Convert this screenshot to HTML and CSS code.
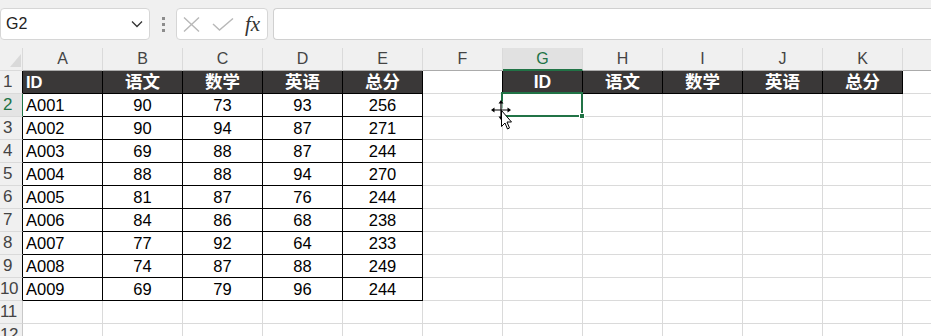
FILE: index.html
```html
<!DOCTYPE html>
<html>
<head>
	<title>成绩表</title>
	<meta charset=utf-8>
	<link rel="stylesheet" href="styles.css">
</head>
<body>
	<div class="toolbar">
		<div class="namebox">
			<span>G2</span>
			<svg width="12" height="8" viewBox="0 0 12 8"><path d="M1 1.5 L6 6.5 L11 1.5" fill="none" stroke="#333" stroke-width="1.3"/></svg>
		</div>
		<div class="grip"><i></i><i></i><i></i></div>
		<div class="fxbox">
			<svg width="17" height="15" viewBox="0 0 17 15"><path d="M1 0.5 L16 14.5 M16 0.5 L1 14.5" stroke="#b8b8b8" stroke-width="1.4"/></svg>
			<svg width="22" height="13" viewBox="0 0 22 13"><path d="M1 6 L7.5 12 L21 0.5" fill="none" stroke="#b8b8b8" stroke-width="1.4"/></svg>
			<span class="fx">fx</span>
		</div>
		<div class="formula"></div>
	</div>

	<div class="sheet">
		<div class="grid" id="grid"></div>
		<!-- move cursor over G2 -->
		<svg class="cursor" width="26" height="34" viewBox="0 0 26 34">
			<g stroke="#fff" stroke-width="3" stroke-linecap="square">
				<path d="M12 5 V19 M5 12 H19"/>
			</g>
			<path d="M12 4.5 V19.5 M4.5 12 H19.5" stroke="#000" stroke-width="1.2"/>
			<path d="M12 2 L9.5 5.5 H14.5 Z M12 22 L9.5 18.5 H14.5 Z M2 12 L5.5 9.5 V14.5 Z M22 12 L18.5 9.5 V14.5 Z" fill="#000"/>
			<path d="M12.5 12.5 V28.5 L16 25 L18.5 31 L20.5 30 L18 24 H22.5 Z" fill="#fff" stroke="#000" stroke-width="1" stroke-linejoin="round"/>
		</svg>
	</div>

	<script>
		let letters = 'ABCDEFGHIJK'.split('');
		let heads = ['ID', '语文', '数学', '英语', '总分'];
		let rows = [
			['A001', 90, 73, 93, 256],
			['A002', 90, 94, 87, 271],
			['A003', 69, 88, 87, 244],
			['A004', 88, 88, 94, 270],
			['A005', 81, 87, 76, 244],
			['A006', 84, 86, 68, 238],
			['A007', 77, 92, 64, 233],
			['A008', 74, 87, 88, 249],
			['A009', 69, 79, 96, 244]
		];
		let grid = document.getElementById('grid');

		function add(cls, text) {
			let d = document.createElement('div');
			d.className = cls;
			d.textContent = text === undefined ? '' : text;
			grid.appendChild(d);
			return d;
		}

		add('corner');
		letters.forEach(function (l) {
			add('colhead' + (l == 'G' ? ' sel' : ''), l);
		});
		add('colhead');

		for (let r = 1; r <= 12; r++) {
			add('rowhead' + (r <= 10 ? ' edge' : '') + (r == 2 ? ' sel' : '') + (r >= 10 ? ' wide' : ''), r);
			for (let c = 0; c < 12; c++) {
				let cls = 'cell';
				let text = '';
				if (r <= 10 && c <= 4) {
					cls += ' tb';
					if (r == 1) {
						cls += ' hd';
						text = heads[c];
					} else {
						text = rows[r - 2][c];
					}
					if (c > 0) cls += ' c';
				}
				if (r == 1 && c >= 6 && c <= 10) {
					cls += ' tb hd c';
					text = heads[c - 6];
				}
				if (r == 1 && c == 5) cls += ' bl';
				let d = add(cls, text);
				if (r == 2 && c == 6) {
					d.classList.add('active');
					d.innerHTML = '<div class="selbox"><i class="handle"></i></div>';
				}
			}
		}
	</script>
</body>
</html>
```

FILE: styles.css
```css
body {
	margin: 0;
	width: 931px;
	height: 336px;
	overflow: hidden;
	background: #f0f0f0;
	font-family: "Liberation Sans", "Noto Sans CJK SC", sans-serif;
}

/* formula bar */
.toolbar {
	display: flex;
	align-items: center;
	height: 32px;
	padding: 8px 0;
}
.namebox {
	width: 150px;
	height: 32px;
	box-sizing: border-box;
	background: #fff;
	border: 1px solid #d6d6d6;
	border-radius: 4px;
	display: flex;
	align-items: center;
	justify-content: space-between;
	padding: 0 6px 0 5px;
	font-size: 16px;
	color: #222;
}
.grip {
	width: 26px;
	display: flex;
	flex-direction: column;
	align-items: center;
	gap: 3px;
}
.grip i {
	width: 3px;
	height: 3px;
	background: #8c8c8c;
}
.fxbox {
	width: 92px;
	height: 32px;
	box-sizing: border-box;
	background: #fff;
	border: 1px solid #d6d6d6;
	border-radius: 4px;
	display: flex;
	align-items: center;
	gap: 12px;
	padding-left: 6px;
	margin-right: 5px;
}
.fx {
	font-family: "Liberation Serif", serif;
	font-style: italic;
	font-size: 21px;
	color: #333;
	margin-left: -1px;
}
.formula {
	flex: 1;
	height: 32px;
	box-sizing: border-box;
	background: #fff;
	border: 1px solid #d0d0d0;
	border-right: none;
	border-radius: 4px 0 0 4px;
}

/* sheet */
.sheet {
	position: relative;
	background: #fff;
	overflow: hidden;
	height: 288px;
}
.grid {
	display: grid;
	grid-template-columns: 23px repeat(12, 80px);
	grid-auto-rows: 23px;
}
.grid > div {
	box-sizing: border-box;
	border-right: 1px solid #dadada;
	border-bottom: 1px solid #dadada;
	overflow: hidden;
	white-space: nowrap;
}
.corner {
	background: #f0f0f0;
	display: flex;
	align-items: flex-end;
	justify-content: flex-end;
	padding: 0 1px 3px 0;
}
.corner::after {
	content: "";
	width: 0;
	height: 0;
	border-left: 11px solid transparent;
	border-bottom: 13px solid #d9d9d9;
}
.colhead {
	background: #f0f0f0;
	border-bottom-color: #ababab !important;
	text-align: center;
	font-size: 16px;
	line-height: 22px;
	color: #444;
}
.colhead.sel {
	background: #e1e1e1;
	color: #217346;
	border-bottom: 2px solid #217346 !important;
}
.rowhead {
	background: #f0f0f0;
	border-right-color: #c8c8c8 !important;
	font-size: 17px;
	line-height: 22px;
	padding-left: 3px;
	color: #444;
}
.rowhead.wide {
	padding-left: 0;
	letter-spacing: -0.5px;
}
.rowhead.edge {
	border-right-color: #000 !important;
}
.rowhead.sel {
	background: #e4e4e4;
	color: #217346;
	border-right-color: #217346 !important;
}

.cell {
	font-size: 16.5px;
	line-height: 22px;
	padding: 0 3px;
	color: #000;
}
.cell.c {
	text-align: center;
}
.grid > .cell.tb {
	border-color: #000;
}
.grid > .cell.bl {
	border-right-color: #000;
}
.cell.hd {
	background: #3a3838;
	color: #fff;
	font-weight: bold;
}
.cell.hd.c {
	font-size: 17.5px;
}

/* active cell */
.grid > .cell.active {
	position: relative;
	overflow: visible;
}
.selbox {
	position: absolute;
	left: -2px;
	top: -2px;
	right: -1px;
	bottom: -1px;
	border: 2px solid #217346;
}
.handle {
	position: absolute;
	right: -4px;
	bottom: -4px;
	width: 4px;
	height: 4px;
	background: #217346;
	border: 1px solid #fff;
}

.cursor {
	position: absolute;
	left: 489px;
	top: 50px;
}
```
